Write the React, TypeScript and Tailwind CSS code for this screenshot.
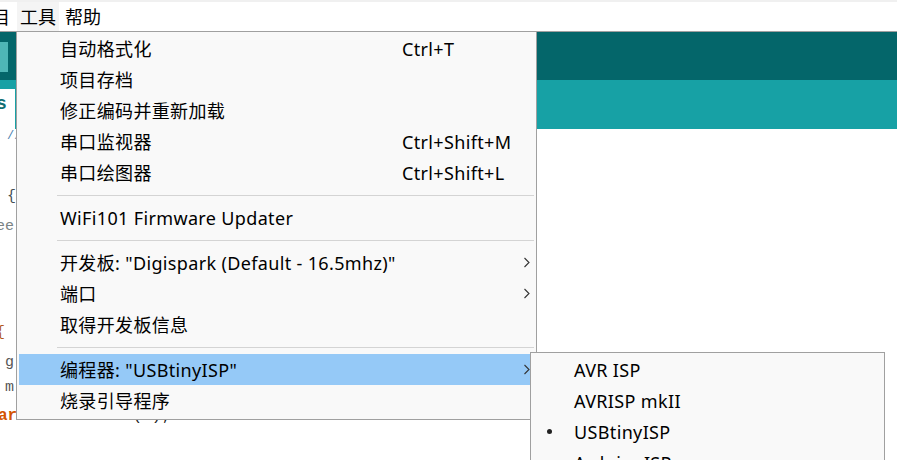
import React from "react";

const UI = { fontFamily: '"Segoe UI", "Noto Sans", "Noto Sans CJK SC", sans-serif' };
const MONO = { fontFamily: '"Liberation Mono", "DejaVu Sans Mono", monospace' };
const SERIF = { fontFamily: '"Liberation Mono", "Liberation Serif", serif' };

function Chevron() {
  return (
    <svg width="8" height="11" viewBox="0 0 8 11" className="absolute right-[3px] top-[10px]">
      <path d="M1.5 1 L6 5.5 L1.5 10" fill="none" stroke="#333" strokeWidth="1.1" />
    </svg>
  );
}

type Item =
  | { kind: "item"; label: string; shortcut?: string; arrow?: boolean; active?: boolean }
  | { kind: "sep" };

const items: Item[] = [
  { kind: "item", label: "自动格式化", shortcut: "Ctrl+T" },
  { kind: "item", label: "项目存档" },
  { kind: "item", label: "修正编码并重新加载" },
  { kind: "item", label: "串口监视器", shortcut: "Ctrl+Shift+M" },
  { kind: "item", label: "串口绘图器", shortcut: "Ctrl+Shift+L" },
  { kind: "sep" },
  { kind: "item", label: "WiFi101 Firmware Updater" },
  { kind: "sep" },
  { kind: "item", label: '开发板: "Digispark (Default - 16.5mhz)"', arrow: true },
  { kind: "item", label: "端口", arrow: true },
  { kind: "item", label: "取得开发板信息" },
  { kind: "sep" },
  { kind: "item", label: '编程器: "USBtinyISP"', arrow: true, active: true },
  { kind: "item", label: "烧录引导程序" },
];

const subItems = [
  { label: "AVR ISP" },
  { label: "AVRISP mkII" },
  { label: "USBtinyISP", checked: true },
  { label: "ArduinoISP" },
];

export default function App() {
  return (
    <div className="relative w-[897px] h-[460px] overflow-hidden bg-white text-black" style={UI}>
      {/* top strip */}
      <div className="h-[2px] bg-[#f0f0f0]" />
      {/* menubar */}
      <div className="h-[30px] flex items-stretch border-b border-[#a0a0a0] text-[18px] leading-none">
        <div className="w-[17px] flex items-center justify-end pr-[7px] overflow-hidden">
          <span className="shrink-0">目</span>
        </div>
        <div className="flex items-center px-[3px] bg-[#f4f4f4]">工具</div>
        <div className="flex items-center px-[6px]">帮助</div>
      </div>
      {/* toolbar */}
      <div className="h-[48px] bg-[#04666a] flex items-start">
        <div className="mt-[10px] w-[8px] h-[30px] bg-[#4eb6b6]" />
      </div>
      {/* tab bar */}
      <div className="h-[49px] bg-[#17a1a5] flex items-end">
        <div className="w-[15px] h-[40px] bg-white overflow-hidden flex items-start pt-[6px] text-[#0f6f73] font-bold text-[18px] leading-none" style={MONO}>
          <span className="-ml-[4px]">s</span>
        </div>
      </div>
      {/* editor */}
      <div className="flex flex-col text-[15px] leading-none whitespace-pre" style={MONO}>
        <div className="mt-[1px] h-[14px] text-[#4a7fb0] text-[12px] pl-[7px]">//</div>
        <div className="mt-[45px] h-[30px] text-[#434f54] pl-[7px]">{"{"}</div>
        <div className="h-[30px] text-[#7a8486] -ml-[4px]">ee</div>
        <div className="mt-[76px] h-[30px] text-[#b35a1a] -ml-[4px]">{"{"}</div>
        <div className="h-[25px] text-[#555] pl-[5px]" style={SERIF}>g</div>
        <div className="h-[28px] text-[#555] pl-[5px]" style={SERIF}>m</div>
        <div className="h-[24px] -ml-[2px] text-[16px]">
          <span className="text-[#d35400] font-bold">ar</span>
          <span className="text-[#222]">1.setTimeout(0);</span>
        </div>
      </div>

      {/* dropdown menu */}
      <div className="absolute left-[16px] top-[31px] w-[521px] bg-[#f9f9f9] border border-[#a0a0a0] px-[2px] pt-[1px] pb-[3px] text-[18px] tracking-[0.35px] leading-none">
        {items.map((it, i) =>
          it.kind === "sep" ? (
            <div key={i} className="h-[14px] flex items-center pl-[38px]">
              <div className="h-px w-full bg-[#d4d4d4]" />
            </div>
          ) : (
            <div
              key={i}
              className={`relative h-[31px] flex items-center pl-[41px] ${it.active ? "bg-[#95c9f7]" : ""}`}
            >
              <span>{it.label}</span>
              {it.shortcut && <span className="absolute left-[383px]">{it.shortcut}</span>}
              {it.arrow && <Chevron />}
            </div>
          )
        )}
      </div>

      {/* submenu */}
      <div className="absolute left-[530px] top-[352px] w-[355px] h-[130px] bg-[#f9f9f9] border border-[#a0a0a0] pt-[1px] px-[2px] text-[18px] tracking-[0.35px] leading-none">
        {subItems.map((s, i) => (
          <div key={i} className="relative h-[31px] flex items-center pl-[41px]">
            {s.checked && (
              <span className="absolute left-[14px] top-[13px] w-[5px] h-[5px] rounded-full bg-[#222]" />
            )}
            <span>{s.label}</span>
          </div>
        ))}
      </div>
    </div>
  );
}
